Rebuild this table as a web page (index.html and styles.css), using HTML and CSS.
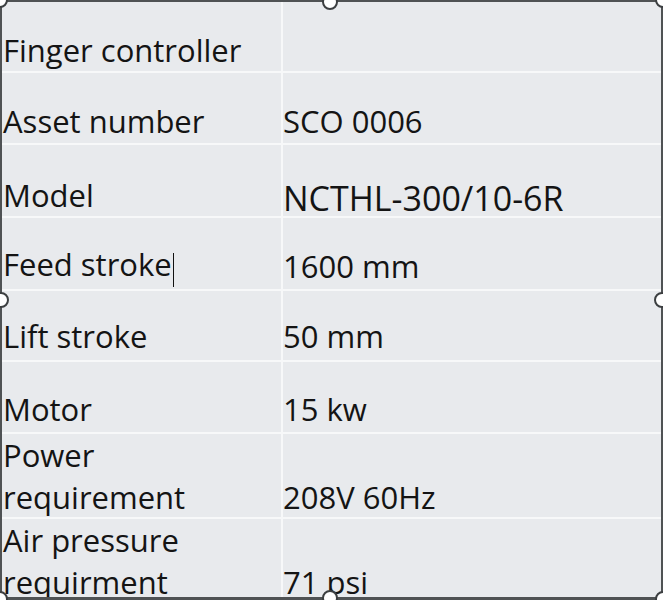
FILE: index.html
```html
<!DOCTYPE html>
<html>
<head>
<meta charset="utf-8">
<link rel="stylesheet" href="styles.css">
</head>
<body>
<div class="frame">
  <div class="spec">
    <div class="row r1"><div class="k">Finger controller</div><div class="v"></div></div>
    <div class="row r2"><div class="k">Asset number</div><div class="v">SCO 0006</div></div>
    <div class="row r3"><div class="k">Model</div><div class="v big">NCTHL-300/10-6R</div></div>
    <div class="row r4"><div class="k">Feed stroke<span class="caret"></span></div><div class="v">1600 mm</div></div>
    <div class="row r5"><div class="k">Lift stroke</div><div class="v">50 mm</div></div>
    <div class="row r6"><div class="k">Motor</div><div class="v">15 kw</div></div>
    <div class="row r7"><div class="k">Power<br>requirement</div><div class="v">208V 60Hz</div></div>
    <div class="row r8"><div class="k">Air pressure<br>requirment</div><div class="v">71 psi</div></div>
  </div>
  <span class="handle h-tl"></span>
  <span class="handle h-tc"></span>
  <span class="handle h-tr"></span>
  <span class="handle h-ml"></span>
  <span class="handle h-mr"></span>
  <span class="handle h-bl"></span>
  <span class="handle h-bc"></span>
  <span class="handle h-br"></span>
</div>
</body>
</html>
```
FILE: styles.css
```css
html, body {
  margin: 0;
  padding: 0;
  background: #e8eaed;
}
.frame {
  position: relative;
  width: 663px;
  height: 600px;
  box-sizing: border-box;
  border: 2px solid #4f5254;
  border-bottom-width: 3px;
  background: #e8eaed;
  overflow: visible;
}
.spec {
  font-family: "Open Sans", Roboto, sans-serif;
  font-size: 31px;
  color: #141414;
  line-height: 42px;
  background: linear-gradient(to right, transparent 279px, #f7f8f9 279px, #f7f8f9 281px, transparent 281px);
  height: 100%;
  overflow: hidden;
}
.row {
  display: grid;
  grid-template-columns: 279px 1fr;
  align-items: end;
  box-sizing: border-box;
  border-bottom: 2px solid #f7f8f9;
}
.row:last-child {
  border-bottom: none;
}
.k {
  padding-left: 1px;
  white-space: nowrap;
}
.v {
  padding-left: 2px;
  white-space: nowrap;
}
.big {
  font-size: 34px;
  margin-bottom: -3px;
}
.r1 { height: 71px; }
.r2 { height: 72px; }
.r3 { height: 73px; }
.r4 { height: 73px; }
.r5 { height: 71px; }
.r6 { height: 72px; }
.r7 { height: 85px; }
.r8 { height: 78px; }
.r2 .k, .r2 .v { padding-bottom: 1px; }
.r4 .k, .r4 .v { padding-bottom: 2px; }
.r5 .k, .r5 .v { padding-bottom: 3px; }
.r6 .k, .r6 .v { padding-bottom: 2px; }
.r7 .k, .r7 .v { padding-bottom: 3px; }
.r8 .k, .r8 .v { margin-bottom: -2px; }
.caret {
  display: inline-block;
  width: 1.5px;
  height: 34px;
  background: #111;
  vertical-align: -11px;
  margin-left: 1px;
}
.handle {
  position: absolute;
  width: 16px;
  height: 16px;
  border: 2px solid #3c3f41;
  border-radius: 50%;
  background: #fff;
  box-sizing: border-box;
}
.h-tl { left: -10px; top: -10px; }
.h-tc { left: 320px; top: -8px; }
.h-tr { right: -10px; top: -10px; }
.h-ml { left: -9px; top: 290px; }
.h-mr { right: -9px; top: 290px; }
.h-bl { left: -10px; bottom: -10px; }
.h-bc { left: 320px; bottom: -9px; }
.h-br { right: -10px; bottom: -10px; }
```
